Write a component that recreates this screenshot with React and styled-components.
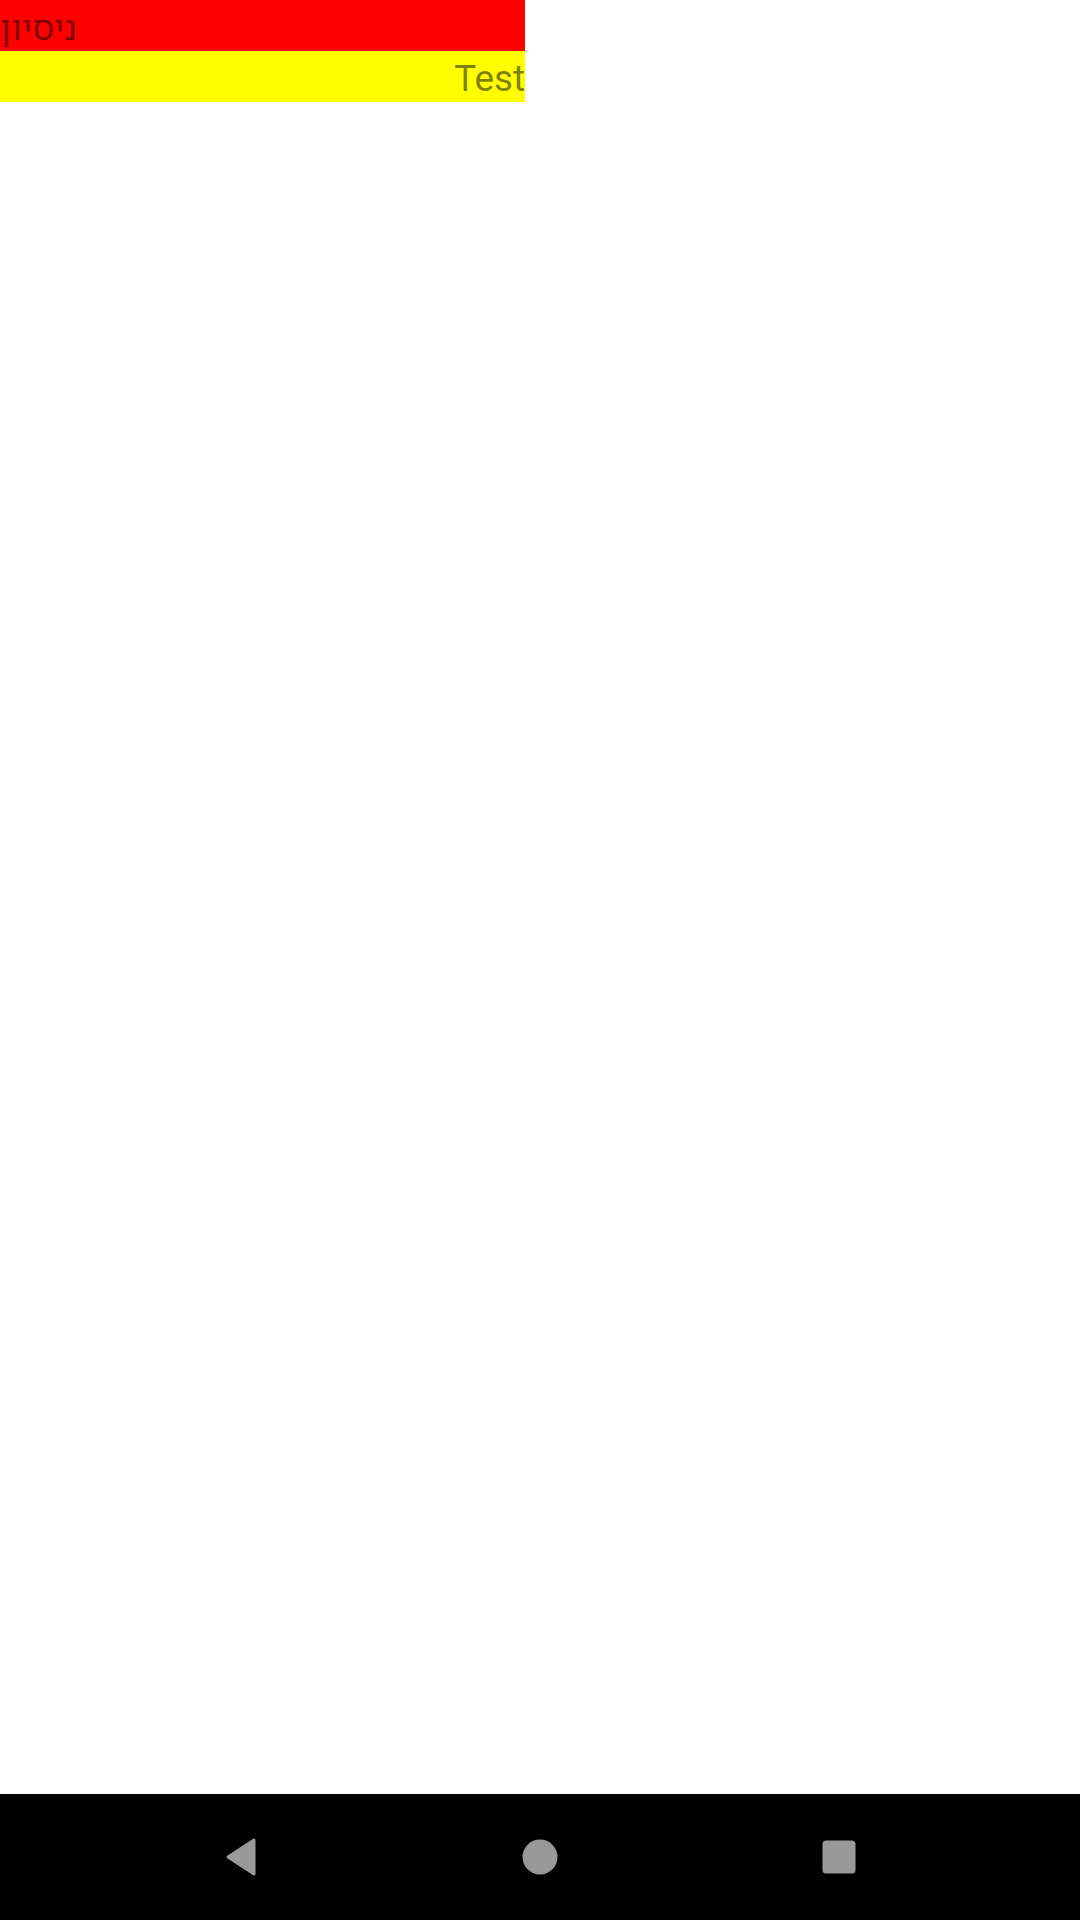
import React from "react";
import styled, { createGlobalStyle } from "styled-components";

const GlobalStyle = createGlobalStyle`
  html, body {
    margin: 0;
    padding: 0;
    background: #ffffff;
  }
  #root {
    min-height: 100vh;
  }
`;

const Screen = styled.div`
  display: flex;
  flex-direction: column;
  height: 100vh;
  font-family: Roboto, "Noto Sans Hebrew", "Liberation Sans", "DejaVu Sans", sans-serif;
`;

const Content = styled.div`
  flex: 1;
  display: flex;
  flex-direction: column;
`;

const Row = styled.div`
  width: 525px;
  height: 51px;
  line-height: 56px;
  font-size: ${(p) => p.$size || "36.75px"};
  color: rgba(0, 0, 0, 0.5);
  background: ${(p) => p.$bg};
  text-align: ${(p) => p.$align};
  white-space: nowrap;
  overflow: hidden;
`;

const NavBar = styled.div`
  height: 126px;
  background: #000000;
  display: flex;
  justify-content: center;
  align-items: center;
`;

const NavButton = styled.div`
  width: 299px;
  height: 100%;
  display: flex;
  justify-content: center;
  align-items: center;
`;

const iconColor = "#999999";

function BackIcon() {
  return (
    <svg width="34" height="40" viewBox="0 0 34 40">
      <path
        d="M4 20 L30 3 L30 37 Z"
        fill={iconColor}
        stroke={iconColor}
        strokeWidth="3"
        strokeLinejoin="round"
      />
    </svg>
  );
}

function HomeIcon() {
  return (
    <svg width="36" height="36" viewBox="0 0 36 36">
      <circle cx="18" cy="18" r="17.5" fill={iconColor} />
    </svg>
  );
}

function RecentsIcon() {
  return (
    <svg width="34" height="34" viewBox="0 0 34 34">
      <rect x="0.5" y="0.5" width="33" height="33" rx="3.5" fill={iconColor} />
    </svg>
  );
}

export default function App() {
  return (
    <>
      <GlobalStyle />
      <Screen>
        <Content>
          <Row $bg="#ff0000" $align="left" $size="34.5px" dir="rtl">
            <span dir="rtl">ניסיון</span>
          </Row>
          <Row $bg="#ffff00" $align="right">
            Test
          </Row>
        </Content>
        <NavBar>
          <NavButton>
            <BackIcon />
          </NavButton>
          <NavButton>
            <HomeIcon />
          </NavButton>
          <NavButton>
            <RecentsIcon />
          </NavButton>
        </NavBar>
      </Screen>
    </>
  );
}
